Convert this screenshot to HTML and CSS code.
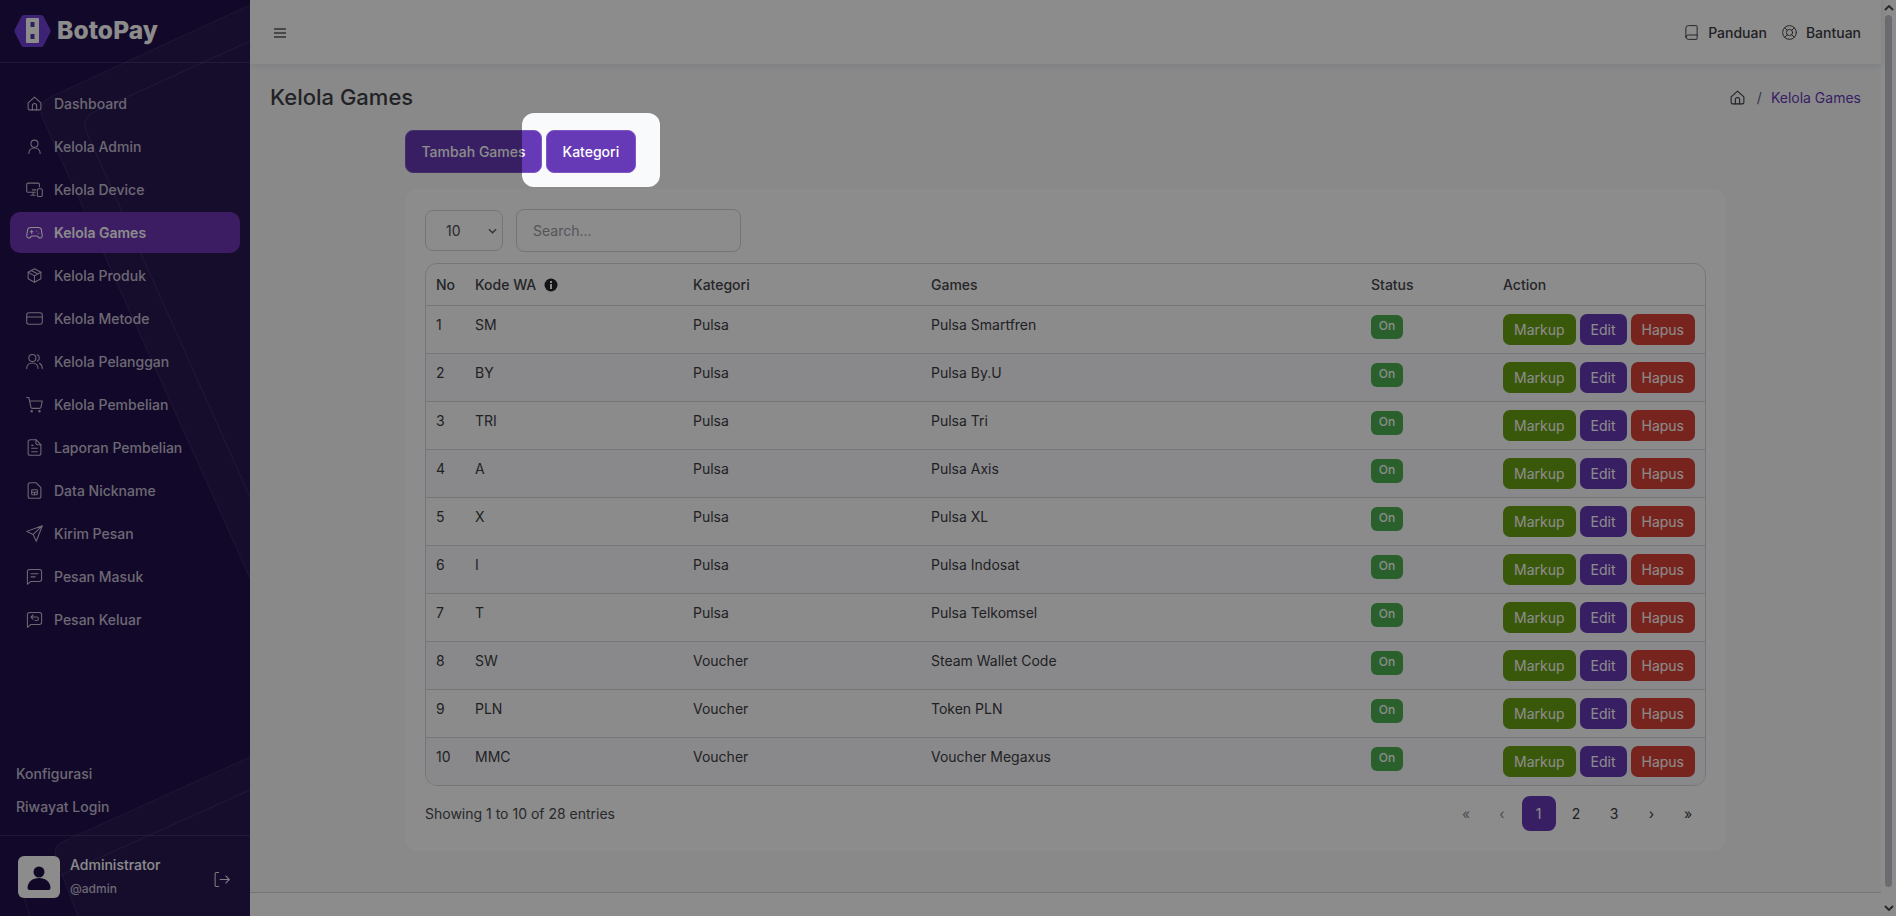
FILE: index.html
```html
<!DOCTYPE html>
<html lang="id">
<head>
<meta charset="utf-8">
<title>BotoPay - Kelola Games</title>
<link rel="stylesheet" href="styles.css">
</head>
<body>
<svg class="defs" width="0" height="0" aria-hidden="true">
  <symbol id="i-home" viewBox="0 0 24 24"><path d="M3 11l9-8 9 8v8a2 2 0 0 1-2 2H5a2 2 0 0 1-2-2z"/><path d="M9 21v-6a3 3 0 0 1 6 0v6"/></symbol>
  <symbol id="i-user" viewBox="0 0 24 24"><circle cx="12" cy="8" r="5"/><path d="M4 22c0-5 3.500-8 8-8s8 3 8 8"/></symbol>
  <symbol id="i-device" viewBox="0 0 24 24"><path d="M19 8V5a2 2 0 0 0-2-2H3a2 2 0 0 0-2 2v9a2 2 0 0 0 2 2h10"/><path d="M7 20h6M10 16v4M9 12.500h5"/><rect x="16" y="11" width="7" height="11" rx="2"/></symbol>
  <symbol id="i-games" viewBox="0 0 24 24"><path d="M7 5h10a5 5 0 0 1 5 5l1 7a3 3 0 0 1-5.500 1.500L16 17H8l-1.500 1.500A3 3 0 0 1 1 17l1-7a5 5 0 0 1 5-5z"/><path d="M6 11h4M8 9v4M15 10h.01M18 13h.01"/></symbol>
  <symbol id="i-box" viewBox="0 0 24 24"><path d="M21 7.500L12 2.500 3 7.500v9l9 5 9-5z"/><path d="M3 7.500l9 5 9-5M12 12.500v9M7.500 5l9 5"/></symbol>
  <symbol id="i-card" viewBox="0 0 24 24"><rect x="1" y="4" width="22" height="16" rx="3"/><path d="M1 10h22"/></symbol>
  <symbol id="i-users" viewBox="0 0 24 24"><circle cx="9" cy="7" r="5"/><path d="M1 22c0-5 3.500-8 8-8s8 3 8 8M16 2.500a5 5 0 0 1 0 9M19 14.500c2.500 1.500 4 4 4 7.500"/></symbol>
  <symbol id="i-cart" viewBox="0 0 24 24"><circle cx="8" cy="21.500" r="1"/><circle cx="19" cy="21.500" r="1"/><path d="M1 2h3l3 14a2 2 0 0 0 2 1.500h10a2 2 0 0 0 2-1.500l2-9H5.500"/></symbol>
  <symbol id="i-file" viewBox="0 0 24 24"><path d="M14 1H6a3 3 0 0 0-3 3v16a3 3 0 0 0 3 3h12a3 3 0 0 0 3-3V8z"/><path d="M14 1v5a2 2 0 0 0 2 2h5M8 13h8M8 18h8M8 9h2"/></symbol>
  <symbol id="i-sim" viewBox="0 0 24 24"><path d="M14 1H6a3 3 0 0 0-3 3v16a3 3 0 0 0 3 3h12a3 3 0 0 0 3-3V8z"/><rect x="8" y="11" width="8" height="7" rx="1"/><path d="M8 14.500h8M12 14.500V18"/></symbol>
  <symbol id="i-send" viewBox="0 0 24 24"><path d="M23 1L1 9l9 4.500 4.500 9.500zM23 1L10 13.500"/></symbol>
  <symbol id="i-msg" viewBox="0 0 24 24"><path d="M22 15V5a3 3 0 0 0-3-3H5a3 3 0 0 0-3 3v18l5-4h12a3 3 0 0 0 3-3z"/><path d="M7 8h10M7 12.500h6"/></symbol>
  <symbol id="i-reply" viewBox="0 0 24 24"><path d="M22 15V5a3 3 0 0 0-3-3H5a3 3 0 0 0-3 3v18l5-4h12a3 3 0 0 0 3-3z"/><path d="M10 5.500L7 8.500l3 3M7 8.500h8a2.500 2.500 0 0 1 0 5h-2"/></symbol>
  <symbol id="i-logout" viewBox="0 0 24 24"><path d="M8 2H5a2 2 0 0 0-2 2v16a2 2 0 0 0 2 2h3M10 12h13M18 7l5 5-5 5"/></symbol>
  <symbol id="i-book" viewBox="0 0 24 24"><path d="M3 19V5a4 4 0 0 1 4-4h13a1 1 0 0 1 1 1v20a1 1 0 0 1-1 1H7a4 4 0 0 1-4-4zM3 19a4 4 0 0 1 4-3h14"/></symbol>
  <symbol id="i-ring" viewBox="0 0 24 24"><circle cx="12" cy="12" r="11"/><circle cx="12" cy="12" r="5"/><path d="M4.500 4.500l4 4M15.500 15.500l4 4M19.500 4.500l-4 4M8.500 15.500l-4 4"/></symbol>
</svg>

<div class="app">
  <aside class="sidebar">
    <svg class="side-deco" viewBox="0 0 250 916" width="250" height="916" aria-hidden="true">
      <path class="deco-fill" d="M250 5L50 97q-12 6-8 20L250 578z"/>
      <path class="deco-fill" d="M250 757L62 842q-8 4-7 14L78 916H250z"/>
      <path class="deco-line" d="M250 5L50 97q-12 6-8 20L250 578"/>
      <path class="deco-line" d="M250 41L92 113q-10 6-6 18L250 497"/>
      <path class="deco-line" d="M250 757L62 842q-8 4-7 14L78 916"/>
      <path class="deco-line" d="M250 790L32 888q-8 5-7 12L30 916"/>
    </svg>
    <div class="brand">
      <svg class="brand-mark" viewBox="0 0 38 34" width="38" height="34" aria-hidden="true">
        <path class="hex" d="M10 1h17a3 3 0 0 1 2.600 1.500L36 15a4 4 0 0 1 0 4l-6.400 12.500A3 3 0 0 1 27 33H10a3 3 0 0 1-2.600-1.500L1 19a4 4 0 0 1 0-4L7.400 2.500A3 3 0 0 1 10 1z"/>
        <rect class="pill" x="12" y="4" width="13" height="25" rx="1"/>
        <rect class="hexdot" x="16.500" y="8" width="4" height="5"/>
        <rect class="hexdot" x="16.500" y="20" width="4" height="5"/>
      </svg>
      <span class="brand-name">BotoPay</span>
    </div>
    <nav class="menu">
      <a class="item"><svg class="ico"><use href="#i-home"/></svg>Dashboard</a>
      <a class="item"><svg class="ico"><use href="#i-user"/></svg>Kelola Admin</a>
      <a class="item"><svg class="ico"><use href="#i-device"/></svg>Kelola Device</a>
      <a class="item active"><svg class="ico"><use href="#i-games"/></svg>Kelola Games</a>
      <a class="item"><svg class="ico"><use href="#i-box"/></svg>Kelola Produk</a>
      <a class="item"><svg class="ico"><use href="#i-card"/></svg>Kelola Metode</a>
      <a class="item"><svg class="ico"><use href="#i-users"/></svg>Kelola Pelanggan</a>
      <a class="item"><svg class="ico"><use href="#i-cart"/></svg>Kelola Pembelian</a>
      <a class="item"><svg class="ico"><use href="#i-file"/></svg>Laporan Pembelian</a>
      <a class="item"><svg class="ico"><use href="#i-sim"/></svg>Data Nickname</a>
      <a class="item"><svg class="ico"><use href="#i-send"/></svg>Kirim Pesan</a>
      <a class="item"><svg class="ico"><use href="#i-msg"/></svg>Pesan Masuk</a>
      <a class="item"><svg class="ico"><use href="#i-reply"/></svg>Pesan Keluar</a>
    </nav>
    <div class="side-links">
      <a>Konfigurasi</a>
      <a>Riwayat Login</a>
    </div>
    <div class="profile">
      <div class="avatar">
        <svg viewBox="0 0 42 42" width="42" height="42" aria-hidden="true"><circle cx="21" cy="16" r="5.500"/><path d="M9.500 32c0-6 5-10 11.500-10s11.500 4 11.500 10q0 2-2 2H11.500q-2 0-2-2z"/></svg>
      </div>
      <div class="who">
        <div class="who-name">Administrator</div>
        <div class="who-tag">@admin</div>
      </div>
      <svg class="ico logout"><use href="#i-logout"/></svg>
    </div>
  </aside>

  <div class="main">
    <header class="topbar">
      <svg class="burger" viewBox="0 0 12 10" width="12" height="10" aria-hidden="true"><path d="M0 1h12M0 5h12M0 9h12"/></svg>
      <div class="top-links">
        <a class="top-link"><svg class="ico dark"><use href="#i-book"/></svg>Panduan</a>
        <a class="top-link"><svg class="ico dark"><use href="#i-ring"/></svg>Bantuan</a>
      </div>
    </header>

    <main class="content">
      <div class="title-row">
        <h1>Kelola Games</h1>
        <div class="crumbs">
          <svg class="ico dark crumb-home"><use href="#i-home"/></svg>
          <span class="sep">/</span>
          <span class="current">Kelola Games</span>
        </div>
      </div>

      <div class="wrap">
        <div class="actions">
          <button class="btn primary">Tambah Games</button>
          <button class="btn primary">Kategori</button>
        </div>

        <section class="card">
          <div class="filters">
            <div class="select">10<svg viewBox="0 0 10 6" width="9" height="6" aria-hidden="true"><path d="M1 1l4 4 4-4"/></svg></div>
            <div class="search">Search...</div>
          </div>

          <div class="table-box">
            <table>
              <colgroup>
                <col class="c-no"><col class="c-kode"><col class="c-kat"><col class="c-game"><col class="c-stat"><col class="c-act">
              </colgroup>
              <thead>
                <tr>
                  <th>No</th>
                  <th>Kode WA <svg class="info" viewBox="0 0 14 14" width="14" height="14" aria-hidden="true"><circle cx="7" cy="7" r="6.500"/><rect x="6" y="6" width="2" height="5"/><rect x="6" y="3" width="2" height="2"/></svg></th>
                  <th>Kategori</th><th>Games</th><th>Status</th><th>Action</th>
                </tr>
              </thead>
              <tbody>
                <tr><td>1</td><td>SM</td><td>Pulsa</td><td>Pulsa Smartfren</td><td><span class="badge">On</span></td><td class="acts"><a class="b green">Markup</a><a class="b purple">Edit</a><a class="b red">Hapus</a></td></tr>
                <tr><td>2</td><td>BY</td><td>Pulsa</td><td>Pulsa By.U</td><td><span class="badge">On</span></td><td class="acts"><a class="b green">Markup</a><a class="b purple">Edit</a><a class="b red">Hapus</a></td></tr>
                <tr><td>3</td><td>TRI</td><td>Pulsa</td><td>Pulsa Tri</td><td><span class="badge">On</span></td><td class="acts"><a class="b green">Markup</a><a class="b purple">Edit</a><a class="b red">Hapus</a></td></tr>
                <tr><td>4</td><td>A</td><td>Pulsa</td><td>Pulsa Axis</td><td><span class="badge">On</span></td><td class="acts"><a class="b green">Markup</a><a class="b purple">Edit</a><a class="b red">Hapus</a></td></tr>
                <tr><td>5</td><td>X</td><td>Pulsa</td><td>Pulsa XL</td><td><span class="badge">On</span></td><td class="acts"><a class="b green">Markup</a><a class="b purple">Edit</a><a class="b red">Hapus</a></td></tr>
                <tr><td>6</td><td>I</td><td>Pulsa</td><td>Pulsa Indosat</td><td><span class="badge">On</span></td><td class="acts"><a class="b green">Markup</a><a class="b purple">Edit</a><a class="b red">Hapus</a></td></tr>
                <tr><td>7</td><td>T</td><td>Pulsa</td><td>Pulsa Telkomsel</td><td><span class="badge">On</span></td><td class="acts"><a class="b green">Markup</a><a class="b purple">Edit</a><a class="b red">Hapus</a></td></tr>
                <tr><td>8</td><td>SW</td><td>Voucher</td><td>Steam Wallet Code</td><td><span class="badge">On</span></td><td class="acts"><a class="b green">Markup</a><a class="b purple">Edit</a><a class="b red">Hapus</a></td></tr>
                <tr><td>9</td><td>PLN</td><td>Voucher</td><td>Token PLN</td><td><span class="badge">On</span></td><td class="acts"><a class="b green">Markup</a><a class="b purple">Edit</a><a class="b red">Hapus</a></td></tr>
                <tr><td>10</td><td>MMC</td><td>Voucher</td><td>Voucher Megaxus</td><td><span class="badge">On</span></td><td class="acts"><a class="b green">Markup</a><a class="b purple">Edit</a><a class="b red">Hapus</a></td></tr>
              </tbody>
            </table>
          </div>

          <div class="table-foot">
            <span>Showing 1 to 10 of 28 entries</span>
            <div class="pager">
              <a class="pg end off">«</a><a class="pg end off">‹</a><a class="pg on">1</a><a class="pg">2</a><a class="pg">3</a><a class="pg mid">›</a><a class="pg end">»</a>
            </div>
          </div>
        </section>
      </div>
    </main>

    <footer class="foot"></footer>
  </div>

  <div class="scrollbar">
    <svg viewBox="0 0 10 6" width="10" height="6" aria-hidden="true"><path d="M1 5l4-4 4 4"/></svg>
    <div class="thumb"></div>
    <svg viewBox="0 0 10 6" width="10" height="6" aria-hidden="true"><path d="M1 1l4 4 4-4"/></svg>
  </div>
</div>

<div class="spotlight"></div>
</body>
</html>
```

FILE: styles.css
```css
* { box-sizing: border-box; }
html, body { margin: 0; height: 100%; overflow: hidden; }
body {
  font-family: Inter, "Liberation Sans", sans-serif;
  font-size: 14px;
  line-height: 21px;
  color: #4b4b52;
  background: #f9fafc;
}
.defs { position: absolute; }
.app { display: flex; height: 916px; }

/* Sidebar */
.sidebar {
  position: relative;
  width: 250px;
  flex: none;
  display: flex;
  flex-direction: column;
  background: #21104b;
  overflow: hidden;
}
.side-deco { position: absolute; inset: 0; }
.deco-fill { fill: #ffffff; fill-opacity: .04; }
.deco-line { fill: none; stroke: #ffffff; stroke-opacity: .09; }
.brand {
  position: relative;
  height: 63px;
  flex: none;
  display: flex;
  align-items: center;
  gap: 5px;
  padding: 0 0 1px 14px;
  border-bottom: 1px solid rgba(255,255,255,.1);
}
.hex { fill: #713ed6; }
.pill { fill: #fff; }
.hexdot { fill: #5a34a8; }
.brand-name { font-size: 24.500px; font-weight: 800; color: #fff; letter-spacing: .1px; }
.menu {
  position: relative;
  display: flex;
  flex-direction: column;
  padding: 20px 10px 0;
}
.item {
  height: 41px;
  margin-bottom: 2px;
  display: flex;
  align-items: center;
  gap: 11px;
  padding-left: 16px;
  border-radius: 10px;
  color: #c5bfd3;
  font-weight: 500;
}
.item.active { background: #6d35b5; color: #fff; font-weight: 600; }
.ico {
  width: 17px;
  height: 17px;
  flex: none;
  fill: none;
  stroke: currentColor;
  stroke-width: 1.500;
  stroke-linecap: round;
  stroke-linejoin: round;
}
.side-links {
  position: relative;
  margin-top: auto;
  display: flex;
  flex-direction: column;
  gap: 12px;
  padding: 0 16px 18px;
  color: #c5bfd3;
  font-weight: 500;
}
.profile {
  position: relative;
  height: 81px;
  flex: none;
  display: flex;
  align-items: flex-start;
  padding: 20px 20px 0 18px;
  border-top: 1px solid rgba(255,255,255,.1);
}
.avatar { width: 42px; height: 42px; flex: none; border-radius: 6px; background: #fff; }
.avatar svg { display: block; fill: #1f0f47; }
.who { margin-left: 10px; flex: 1; margin-top: -1px; }
.who-name { color: #fff; font-weight: 500; line-height: 20px; }
.who-tag { margin-top: 4px; font-size: 12px; line-height: 20px; color: #c5bfd3; font-weight: 500; }
.logout { margin-top: 15px; color: #e6e1ef; }

/* Main column */
.main { flex: 1; min-width: 0; display: flex; flex-direction: column; }
.topbar {
  height: 64px;
  flex: none;
  display: flex;
  align-items: center;
  justify-content: space-between;
  padding: 1px 20px 0 24px;
  background: #fff;
  box-shadow: 0 1px 8px rgba(0,0,0,.1);
  position: relative;
}
.burger { fill: none; stroke: #5c5c62; stroke-width: 1.500; }
.top-links { display: flex; gap: 15px; }
.top-link { display: flex; align-items: center; gap: 9px; color: #3c3c43; font-weight: 500; }
.top-link .ico { width: 15px; height: 15px; }
.dark { color: #3c3c43; }
.content { flex: 1; padding: 0 20px; min-height: 0; }
.title-row { height: 66px; display: flex; align-items: center; justify-content: space-between; }
h1 { margin: 0; font-size: 22px; font-weight: 500; line-height: 66px; color: #3f3f46; }
.crumbs { display: flex; align-items: center; gap: 8px; }
.crumb-home { margin-right: 3px; }
.sep { color: #6c5a7c; }
.current { color: #6639b6; margin-left: 1px; }
.wrap { width: 1321px; margin-left: 135px; }

.actions { display: flex; gap: 4px; }
.btn {
  height: 43px;
  padding: 0 15.500px;
  border: 1px solid #7e57c2;
  border-radius: 8px;
  font: 500 14px Inter, "Liberation Sans", sans-serif;
}
.primary { background: #6639b6; color: #fff; }

.card {
  margin-top: 16px;
  height: 662px;
  padding: 20px;
  background: #fff;
  border-radius: 12px;
}
.filters { display: flex; align-items: center; gap: 13px; height: 43px; }
.select {
  width: 78px;
  height: 41px;
  display: flex;
  align-items: center;
  justify-content: space-between;
  padding: 0 5px 0 20px;
  border: 1px solid #d3d5da;
  border-radius: 8px;
  color: #4b4b52;
}
.select svg { fill: none; stroke: #5c5c62; stroke-width: 1.500; }
.search {
  width: 225px;
  height: 43px;
  display: flex;
  align-items: center;
  padding-left: 16px;
  border: 1px solid #d3d5da;
  border-radius: 8px;
  color: #9c9ca4;
}
.table-box {
  margin-top: 11px;
  border: 1px solid #d6d8dc;
  border-radius: 12px;
  overflow: hidden;
}
table { width: 100%; border-collapse: collapse; table-layout: fixed; }
.c-no { width: 39px; }
.c-kode { width: 218px; }
.c-kat { width: 238px; }
.c-game { width: 440px; }
.c-stat { width: 132px; }
th {
  height: 41px;
  padding: 0 10px;
  text-align: left;
  font-weight: 500;
  color: #45454c;
  white-space: nowrap;
}
.info { vertical-align: -2px; margin-left: 4px; fill: #25252a; }
.info rect { fill: #fff; }
td {
  height: 48px;
  padding: 8px 10px 0;
  vertical-align: top;
  border-top: 1px solid #d6d8dc;
  color: #3c3c43;
  background: #fafafd;
}
tbody tr:nth-child(odd) td { background: #fdfdfe; }
.badge {
  display: inline-block;
  width: 32px;
  height: 24px;
  border-radius: 6px;
  background: #4caf50;
  color: #fff;
  font-size: 12px;
  font-weight: 500;
  line-height: 22px;
  text-align: center;
}
.acts { padding-left: 10px; padding-right: 0; white-space: nowrap; }
.acts .b + .b { margin-left: 4px; }
.b {
  display: inline-block;
  height: 31px;
  padding: 0 11px;
  border-radius: 7px;
  color: #fff;
  line-height: 31px;
}
.green { background: #6aa011; }
.purple { background: #6639b6; }
.red { background: #d9433a; }
.table-foot {
  height: 55px;
  display: flex;
  align-items: center;
  justify-content: space-between;
}
.pager { display: flex; align-items: center; }
.pg {
  width: 38px;
  height: 35px;
  display: flex;
  align-items: center;
  justify-content: center;
  color: #3c3c43;
  border-radius: 8px;
}
.pg.end { width: 36px; }
.pg.mid { width: 37px; }
.pg.off { color: #8c8c96; }
.pg.on { width: 34px; margin: 0 1.500px; background: #6639b6; color: #fff; }

.foot { height: 24px; flex: none; background: #fff; border-top: 1px solid #d6d8dc; }

/* Scrollbar column */
.scrollbar {
  width: 15px;
  flex: none;
  display: flex;
  flex-direction: column;
  align-items: center;
  justify-content: space-between;
  padding: 5px 0;
  background: #fff;
}
.scrollbar svg { fill: none; stroke: #4f4f4f; stroke-width: 2; }
.thumb { width: 7px; flex: 1; margin: 4px 0 18px; border-radius: 4px; background: #c1c5cc; }

/* Tour highlight: a transparent hole whose shadow dims everything else */
.spotlight {
  position: fixed;
  left: 522px;
  top: 113px;
  width: 138px;
  height: 74px;
  border-radius: 12px;
  box-shadow: 0 0 0 3000px rgba(0,0,0,.45);
  pointer-events: none;
}
```
